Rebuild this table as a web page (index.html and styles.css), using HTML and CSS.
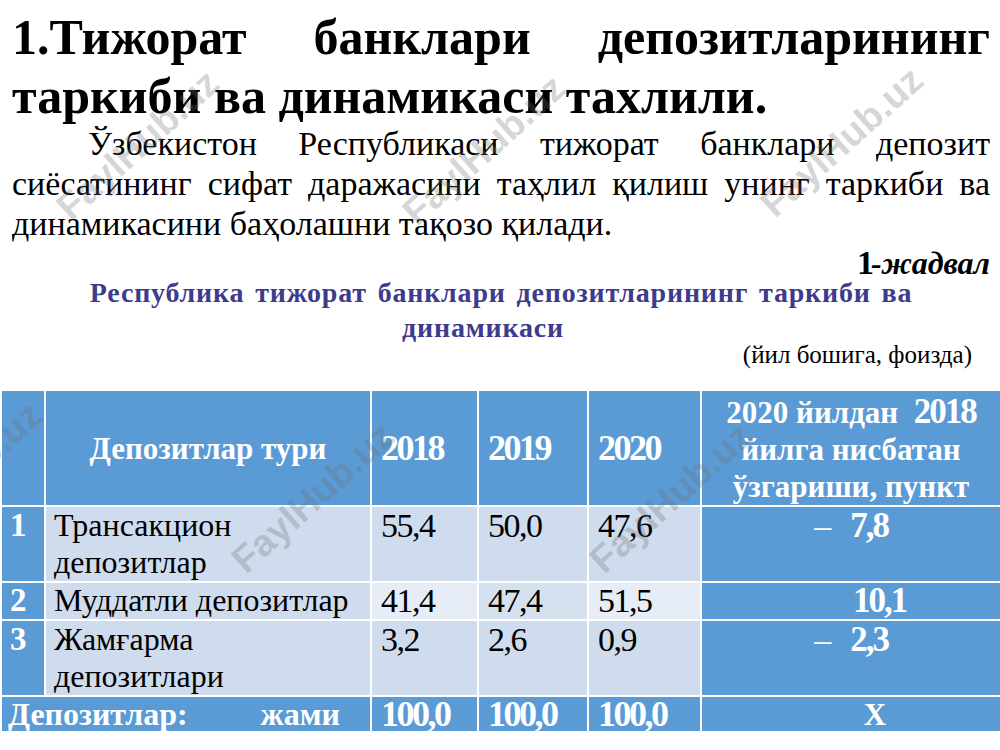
FILE: index.html
```html
<!DOCTYPE html>
<html lang="uz">
<head>
<meta charset="utf-8">
<title>Депозитлар таҳлили</title>
<link rel="stylesheet" href="styles.css">
</head>
<body>
<div class="page">
  <div class="text">
    <h1 class="title">1.Тижорат банклари депозитларининг таркиби ва динамикаси тахлили.</h1>
    <p class="lead">Ўзбекистон Республикаси тижорат банклари депозит сиёсатининг сифат даражасини таҳлил қилиш унинг таркиби ва динамикасини баҳолашни тақозо қилади.</p>
    <div class="tabno"><b>1</b><i>-жадвал</i></div>
    <p class="caption">Республика тижорат банклари депозитларининг таркиби ва<br><span class="cap2">динамикаси</span></p>
    <div class="unit">(йил бошига, фоизда)</div>
  </div>
  <table class="deps">
    <colgroup>
      <col class="c-no"><col class="c-name"><col class="c-y1"><col class="c-y2"><col class="c-y3"><col class="c-chg">
    </colgroup>
    <thead>
      <tr>
        <th></th>
        <th class="h-name">Депозитлар тури</th>
        <th class="h-yr">2018</th>
        <th class="h-yr">2019</th>
        <th class="h-yr">2020</th>
        <th class="h-chg">2020 йилдан&nbsp; <span class="big">2018</span><br>йилга нисбатан<br>ўзгариши, пункт</th>
      </tr>
    </thead>
    <tbody>
      <tr class="r-tall">
        <td class="no">1</td>
        <td class="name">Трансакцион депозитлар</td>
        <td class="val">55,4</td>
        <td class="val">50,0</td>
        <td class="val">47,6</td>
        <td class="chg"><span class="dash">–</span><b>7,8</b></td>
      </tr>
      <tr class="r-short">
        <td class="no">2</td>
        <td class="name">Муддатли депозитлар</td>
        <td class="val light">41,4</td>
        <td class="val mid">47,4</td>
        <td class="val light">51,5</td>
        <td class="chg"><span class="dash ghost">–</span><b>10,1</b></td>
      </tr>
      <tr class="r-tall">
        <td class="no">3</td>
        <td class="name">Жамғарма депозитлари</td>
        <td class="val">3,2</td>
        <td class="val">2,6</td>
        <td class="val">0,9</td>
        <td class="chg"><span class="dash">–</span><b>2,3</b></td>
      </tr>
      <tr class="r-total">
        <td colspan="2" class="total-label"><span>Депозитлар:</span><span class="right">жами</span></td>
        <td class="tot">100,0</td>
        <td class="tot">100,0</td>
        <td class="tot">100,0</td>
        <td class="tot-x">Х</td>
      </tr>
    </tbody>
  </table>
  <div class="wm wm1">FaylHub.uz</div>
  <div class="wm wm2">FaylHub.uz</div>
  <div class="wm wm3">FaylHub.uz</div>
  <div class="wm wm4">FaylHub.uz</div>
  <div class="wm wm5">FaylHub.uz</div>
  <div class="wm wm6">FaylHub.uz</div>
</div>
</body>
</html>
```

FILE: styles.css
```css
* { box-sizing: border-box; margin: 0; padding: 0; }
html, body { background: #fff; }
body {
  font-family: "Liberation Serif", "Times New Roman", serif;
  color: #000;
  width: 1000px;
  height: 750px;
  overflow: hidden;
}
.page { position: relative; width: 1000px; height: 750px; overflow: hidden; }
.text { padding: 0 10px 0 12px; }

.title {
  font-size: 50px;
  font-weight: 700;
  line-height: 59px;
  margin-top: 8px;
  text-align: justify;
  text-align-last: left;
}

.lead {
  font-size: 34px;
  line-height: 40px;
  text-align: justify;
  text-indent: 76px;
  margin-top: -2px;
}

.tabno {
  text-align: right;
  font-size: 32px;
  line-height: 30px;
  margin-top: 4px;
  font-weight: 700;
}
.tabno b { letter-spacing: -3px; font-size: 34px; }
.tabno i { font-style: italic; font-weight: 700; }

.caption {
  color: #3f3b8c;
  font-size: 28px;
  font-weight: 700;
  line-height: 35px;
  text-align: center;
  margin-top: -3px;
  letter-spacing: 0.8px;
  word-spacing: 3px;
}
.cap2 { margin-right: 36px; }

.unit {
  text-align: right;
  font-size: 25px;
  line-height: 28px;
  margin-top: -4px;
  padding-right: 18px;
}

/* table */
.deps {
  width: 1000px;
  border-collapse: collapse;
  table-layout: fixed;
  margin-top: 20px;
}
.c-no { width: 44px; }
.c-name { width: 326px; }
.c-y1 { width: 107px; }
.c-y2 { width: 110px; }
.c-y3 { width: 113px; }
.c-chg { width: 300px; }

.deps th, .deps td {
  border: 2px solid #fff;
  padding: 0 8px;
  vertical-align: top;
  font-size: 32px;
  line-height: 37px;
}
.deps thead th {
  background: #5b9bd5;
  color: #fff;
  font-weight: 700;
  vertical-align: middle;
  height: 111px;
}
.deps th.h-name { text-align: center; font-size: 31px; }
.deps th.h-yr { text-align: left; font-size: 36px; letter-spacing: -2.5px; padding-left: 9px; }
.deps th.h-chg { text-align: center; font-size: 31px; line-height: 37px; padding: 2px 4px 0; }
.h-chg .big { font-size: 35px; letter-spacing: -2px; }

.deps td { background: #cfdcee; }
.r-tall td { height: 76px; }
.deps .r-short td { height: 36px; line-height: 35px; }

.deps td.no {
  background: #5b9bd5;
  color: #fff;
  font-weight: 700;
  font-size: 33px;
  padding: 0 0 0 8px;
}
.deps td.name { padding-left: 8px; }
.deps td.val { padding-left: 9px; letter-spacing: -1.5px; font-size: 34px; }
.deps td.light { background: #e7edf7; }
.deps td.mid { background: #d6e1f0; }

.deps td.chg {
  background: #5b9bd5;
  color: #fff;
  text-align: center;
}
.chg .dash { font-weight: 400; font-size: 34px; margin-right: 19px; }
.chg .ghost { visibility: hidden; margin-right: 40px; }
.chg b { font-size: 35px; letter-spacing: -2px; }

.deps .r-total td {
  background: #5b9bd5;
  color: #fff;
  font-weight: 700;
  vertical-align: middle;
  height: 36px;
  line-height: 33px;
}
.deps td.total-label { padding: 0 30px 0 6px; font-size: 32px; }
.total-label .right { float: right; }
.deps td.tot { font-size: 36px; letter-spacing: -2.5px; padding-left: 9px; }
.deps td.tot-x { text-align: center; font-size: 31px; padding-left: 56px; }

/* watermarks */
.wm {
  position: absolute;
  font-family: "Liberation Sans", Arial, sans-serif;
  font-weight: 700;
  font-size: 38px;
  color: rgba(110, 110, 110, 0.28);
  white-space: nowrap;
  transform: translate(-50%, -50%) rotate(-42deg);
  pointer-events: none;
}
.wm1 { left: 138px; top: 145px; }
.wm2 { left: 484px; top: 150px; }
.wm3 { left: 842px; top: 142px; }
.wm4 { left: -39px; top: 477px; }
.wm5 { left: 313px; top: 498px; }
.wm6 { left: 671px; top: 498px; }
```
